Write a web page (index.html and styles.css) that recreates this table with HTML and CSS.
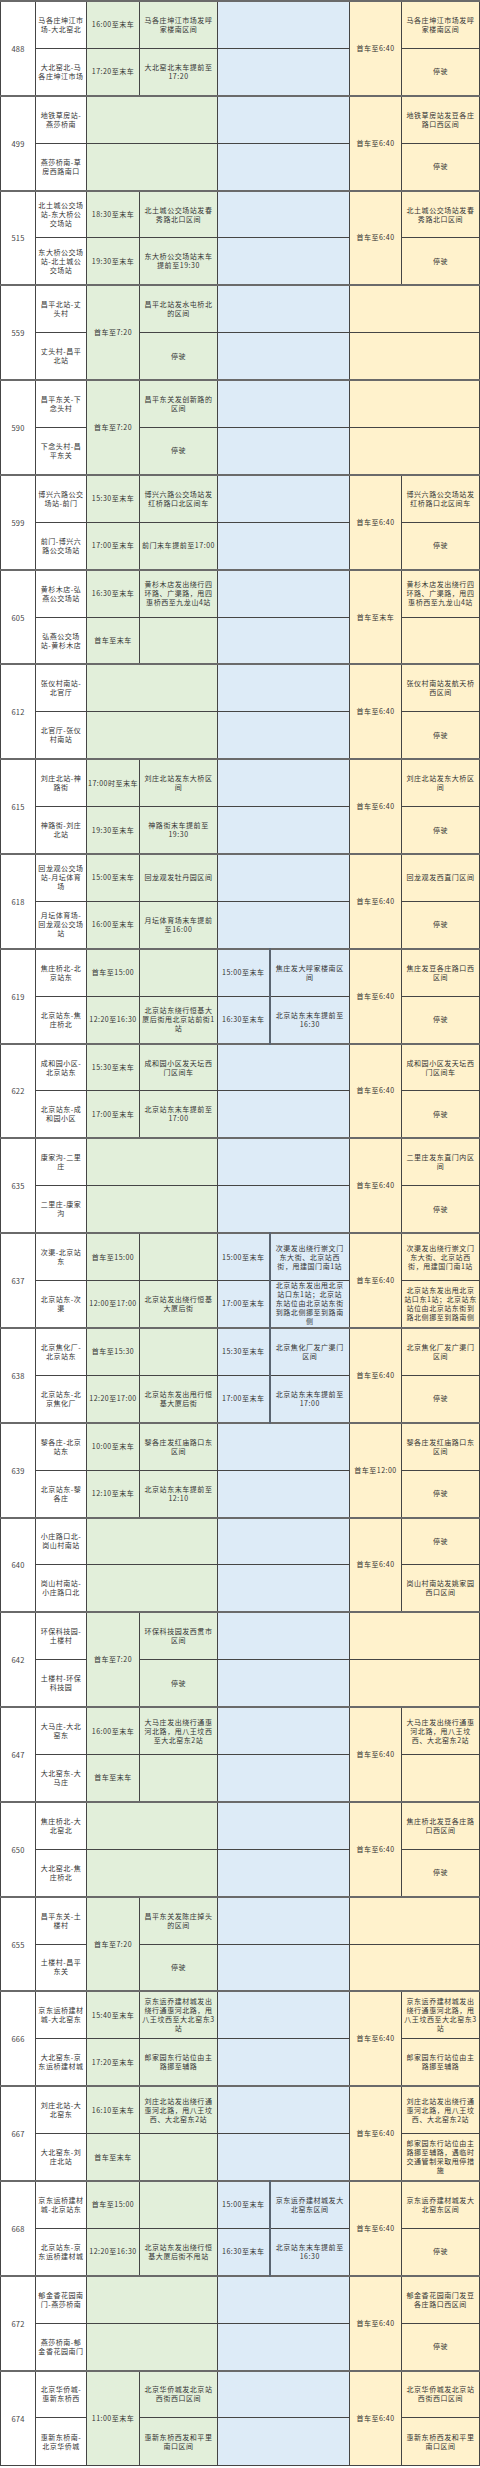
FILE: index.html
```html
<!DOCTYPE html>
<html lang="zh-CN">
<head>
<meta charset="utf-8">
<title>公交线路调整表</title>
<link rel="stylesheet" href="styles.css">
</head>
<body>
<table class="t">
<colgroup>
<col class="w1"><col class="w2"><col class="w3"><col class="w4"><col class="w5"><col class="w6"><col class="w7"><col class="w8">
</colgroup>
<tbody>
<tr class="gs"><td class="r" rowspan="2">488</td><td class="s">马各庄坤江市场-大北窑北</td><td class="g t">16:00至末车</td><td class="g">马各庄坤江市场发呼家楼南区间</td><td class="b" colspan="2"></td><td class="y t" rowspan="2">首车至6:40</td><td class="y">马各庄坤江市场发呼家楼南区间</td></tr>
<tr><td class="s">大北窑北-马各庄坤江市场</td><td class="g t">17:20至末车</td><td class="g">大北窑北末车提前至17:20</td><td class="b" colspan="2"></td><td class="y">停驶</td></tr>

<tr class="gs"><td class="r" rowspan="2">499</td><td class="s">地铁草房站-燕莎桥南</td><td class="g" colspan="2"></td><td class="b" colspan="2"></td><td class="y t" rowspan="2">首车至6:40</td><td class="y">地铁草房站发豆各庄路口西区间</td></tr>
<tr><td class="s">燕莎桥南-草房西路南口</td><td class="g" colspan="2"></td><td class="b" colspan="2"></td><td class="y">停驶</td></tr>

<tr class="gs"><td class="r" rowspan="2">515</td><td class="s">北土城公交场站-东大桥公交场站</td><td class="g t">18:30至末车</td><td class="g">北土城公交场站发春秀路北口区间</td><td class="b" colspan="2"></td><td class="y t" rowspan="2">首车至6:40</td><td class="y">北土城公交场站发春秀路北口区间</td></tr>
<tr><td class="s">东大桥公交场站-北土城公交场站</td><td class="g t">19:30至末车</td><td class="g">东大桥公交场站末车提前至19:30</td><td class="b" colspan="2"></td><td class="y">停驶</td></tr>

<tr class="gs"><td class="r" rowspan="2">559</td><td class="s">昌平北站-丈头村</td><td class="g t" rowspan="2">首车至7:20</td><td class="g">昌平北站发水屯桥北的区间</td><td class="b" colspan="2"></td><td class="y" colspan="2"></td></tr>
<tr><td class="s">丈头村-昌平北站</td><td class="g">停驶</td><td class="b" colspan="2"></td><td class="y" colspan="2"></td></tr>

<tr class="gs"><td class="r" rowspan="2">590</td><td class="s">昌平东关-下念头村</td><td class="g t" rowspan="2">首车至7:20</td><td class="g">昌平东关发创新路的区间</td><td class="b" colspan="2"></td><td class="y" colspan="2"></td></tr>
<tr><td class="s">下念头村-昌平东关</td><td class="g">停驶</td><td class="b" colspan="2"></td><td class="y" colspan="2"></td></tr>

<tr class="gs"><td class="r" rowspan="2">599</td><td class="s">博兴六路公交场站-前门</td><td class="g t">15:30至末车</td><td class="g">博兴六路公交场站发红桥路口北区间车</td><td class="b" colspan="2"></td><td class="y t" rowspan="2">首车至6:40</td><td class="y">博兴六路公交场站发红桥路口北区间车</td></tr>
<tr><td class="s">前门-博兴六路公交场站</td><td class="g t">17:00至末车</td><td class="g">前门末车提前至17:00</td><td class="b" colspan="2"></td><td class="y">停驶</td></tr>

<tr class="gs"><td class="r" rowspan="2">605</td><td class="s">黄杉木店-弘燕公交场站</td><td class="g t">16:30至末车</td><td class="g">黄杉木店发出绕行四环路、广渠路，甩四惠桥西至九龙山4站</td><td class="b" colspan="2"></td><td class="y t" rowspan="2">首车至末车</td><td class="y">黄杉木店发出绕行四环路、广渠路，甩四惠桥西至九龙山4站</td></tr>
<tr><td class="s">弘燕公交场站-黄杉木店</td><td class="g t">首车至末车</td><td class="g"></td><td class="b" colspan="2"></td><td class="y"></td></tr>

<tr class="gs"><td class="r" rowspan="2">612</td><td class="s">张仪村南站-北官厅</td><td class="g" colspan="2"></td><td class="b" colspan="2"></td><td class="y t" rowspan="2">首车至6:40</td><td class="y">张仪村南站发航天桥西区间</td></tr>
<tr><td class="s">北官厅-张仪村南站</td><td class="g" colspan="2"></td><td class="b" colspan="2"></td><td class="y">停驶</td></tr>

<tr class="gs"><td class="r" rowspan="2">615</td><td class="s">刘庄北站-神路街</td><td class="g t">17:00时至末车</td><td class="g">刘庄北站发东大桥区间</td><td class="b" colspan="2"></td><td class="y t" rowspan="2">首车至6:40</td><td class="y">刘庄北站发东大桥区间</td></tr>
<tr><td class="s">神路街-刘庄北站</td><td class="g t">19:30至末车</td><td class="g">神路街末车提前至19:30</td><td class="b" colspan="2"></td><td class="y">停驶</td></tr>

<tr class="gs"><td class="r" rowspan="2">618</td><td class="s">回龙观公交场站-月坛体育场</td><td class="g t">15:00至末车</td><td class="g">回龙观发牡丹园区间</td><td class="b" colspan="2"></td><td class="y t" rowspan="2">首车至6:40</td><td class="y">回龙观发西直门区间</td></tr>
<tr><td class="s">月坛体育场-回龙观公交场站</td><td class="g t">16:00至末车</td><td class="g">月坛体育场末车提前至16:00</td><td class="b" colspan="2"></td><td class="y">停驶</td></tr>

<tr class="gs"><td class="r" rowspan="2">619</td><td class="s">焦庄桥北-北京站东</td><td class="g t">首车至15:00</td><td class="g"></td><td class="b t">15:00至末车</td><td class="b bd">焦庄发大呼家楼南区间</td><td class="y t" rowspan="2">首车至6:40</td><td class="y">焦庄发豆各庄路口西区间</td></tr>
<tr><td class="s">北京站东-焦庄桥北</td><td class="g t">12:20至16:30</td><td class="g">北京站东绕行恒基大厦后街甩北京站前街1站</td><td class="b t">16:30至末车</td><td class="b bd">北京站东末车提前至16:30</td><td class="y">停驶</td></tr>

<tr class="gs"><td class="r" rowspan="2">622</td><td class="s">成和园小区-北京站东</td><td class="g t">15:30至末车</td><td class="g">成和园小区发天坛西门区间车</td><td class="b" colspan="2"></td><td class="y t" rowspan="2">首车至6:40</td><td class="y">成和园小区发天坛西门区间车</td></tr>
<tr><td class="s">北京站东-成和园小区</td><td class="g t">17:00至末车</td><td class="g">北京站东末车提前至17:00</td><td class="b" colspan="2"></td><td class="y">停驶</td></tr>

<tr class="gs"><td class="r" rowspan="2">635</td><td class="s">康家沟-二里庄</td><td class="g" colspan="2"></td><td class="b" colspan="2"></td><td class="y t" rowspan="2">首车至6:40</td><td class="y">二里庄发东直门内区间</td></tr>
<tr><td class="s">二里庄-康家沟</td><td class="g" colspan="2"></td><td class="b" colspan="2"></td><td class="y">停驶</td></tr>

<tr class="gs"><td class="r" rowspan="2">637</td><td class="s">次渠-北京站东</td><td class="g t">首车至15:00</td><td class="g"></td><td class="b t">15:00至末车</td><td class="b bd">次渠发出绕行崇文门东大街、北京站西街，甩建国门南1站</td><td class="y t" rowspan="2">首车至6:40</td><td class="y">次渠发出绕行崇文门东大街、北京站西街，甩建国门南1站</td></tr>
<tr><td class="s">北京站东-次渠</td><td class="g t">12:00至17:00</td><td class="g">北京站发出绕行恒基大厦后街</td><td class="b t">17:00至末车</td><td class="b bd">北京站东发出甩北京站口东1站；北京站东站位由北京站东街到路北侧挪至到路南侧</td><td class="y">北京站东发出甩北京站口东1站；北京站东站位由北京站东街到路北侧挪至到路南侧</td></tr>

<tr class="gs"><td class="r" rowspan="2">638</td><td class="s">北京焦化厂-北京站东</td><td class="g t">首车至15:30</td><td class="g"></td><td class="b t">15:30至末车</td><td class="b bd">北京焦化厂发广渠门区间</td><td class="y t" rowspan="2">首车至6:40</td><td class="y">北京焦化厂发广渠门区间</td></tr>
<tr><td class="s">北京站东-北京焦化厂</td><td class="g t">12:20至17:00</td><td class="g">北京站东发出甩行恒基大厦后街</td><td class="b t">17:00至末车</td><td class="b bd">北京站东末车提前至17:00</td><td class="y">停驶</td></tr>

<tr class="gs"><td class="r" rowspan="2">639</td><td class="s">黎各庄-北京站东</td><td class="g t">10:00至末车</td><td class="g">黎各庄发红庙路口东区间</td><td class="b" colspan="2"></td><td class="y t" rowspan="2">首车至12:00</td><td class="y">黎各庄发红庙路口东区间</td></tr>
<tr><td class="s">北京站东-黎各庄</td><td class="g t">12:10至末车</td><td class="g">北京站东末车提前至12:10</td><td class="b" colspan="2"></td><td class="y">停驶</td></tr>

<tr class="gs"><td class="r" rowspan="2">640</td><td class="s">小庄路口北-岗山村南站</td><td class="g" colspan="2"></td><td class="b" colspan="2"></td><td class="y t" rowspan="2">首车至6:40</td><td class="y">停驶</td></tr>
<tr><td class="s">岗山村南站-小庄路口北</td><td class="g" colspan="2"></td><td class="b" colspan="2"></td><td class="y">岗山村南站发姚家园西口区间</td></tr>

<tr class="gs"><td class="r" rowspan="2">642</td><td class="s">环保科技园-土楼村</td><td class="g t" rowspan="2">首车至7:20</td><td class="g">环保科技园发西贯市区间</td><td class="b" colspan="2"></td><td class="y" colspan="2"></td></tr>
<tr><td class="s">土楼村-环保科技园</td><td class="g">停驶</td><td class="b" colspan="2"></td><td class="y" colspan="2"></td></tr>

<tr class="gs"><td class="r" rowspan="2">647</td><td class="s">大马庄-大北窑东</td><td class="g t">16:00至末车</td><td class="g">大马庄发出绕行通惠河北路，甩八王坟西至大北窑东2站</td><td class="b" colspan="2"></td><td class="y t" rowspan="2">首车至6:40</td><td class="y">大马庄发出绕行通惠河北路，甩八王坟西、大北窑东2站</td></tr>
<tr><td class="s">大北窑东-大马庄</td><td class="g t">首车至末车</td><td class="g"></td><td class="b" colspan="2"></td><td class="y"></td></tr>

<tr class="gs"><td class="r" rowspan="2">650</td><td class="s">焦庄桥北-大北窑北</td><td class="g" colspan="2"></td><td class="b" colspan="2"></td><td class="y t" rowspan="2">首车至6:40</td><td class="y">焦庄桥北发豆各庄路口西区间</td></tr>
<tr><td class="s">大北窑北-焦庄桥北</td><td class="g" colspan="2"></td><td class="b" colspan="2"></td><td class="y">停驶</td></tr>

<tr class="gs"><td class="r" rowspan="2">655</td><td class="s">昌平东关-土楼村</td><td class="g t" rowspan="2">首车至7:20</td><td class="g">昌平东关发陈庄掉头的区间</td><td class="b" colspan="2"></td><td class="y" colspan="2"></td></tr>
<tr><td class="s">土楼村-昌平东关</td><td class="g">停驶</td><td class="b" colspan="2"></td><td class="y" colspan="2"></td></tr>

<tr class="gs"><td class="r" rowspan="2">666</td><td class="s">京东运桥建材城-大北窑东</td><td class="g t">15:40至末车</td><td class="g">京东运乔建材城发出绕行通惠河北路，甩八王坟西至大北窑东3站</td><td class="b" colspan="2"></td><td class="y t" rowspan="2">首车至6:40</td><td class="y">京东运乔建材城发出绕行通惠河北路，甩八王坟西至大北窑东3站</td></tr>
<tr><td class="s">大北窑东-京东运桥建材城</td><td class="g t">17:20至末车</td><td class="g">郎家园东行站位由主路挪至辅路</td><td class="b" colspan="2"></td><td class="y">郎家园东行站位由主路挪至辅路</td></tr>

<tr class="gs"><td class="r" rowspan="2">667</td><td class="s">刘庄北站-大北窑东</td><td class="g t">16:10至末车</td><td class="g">刘庄北站发出绕行通惠河北路，甩八王坟西、大北窑东2站</td><td class="b" colspan="2"></td><td class="y t" rowspan="2">首车至6:40</td><td class="y">刘庄北站发出绕行通惠河北路，甩八王坟西、大北窑东2站</td></tr>
<tr><td class="s">大北窑东-刘庄北站</td><td class="g t">首车至末车</td><td class="g"></td><td class="b" colspan="2"></td><td class="y">郎家园东行站位由主路挪至辅路，遇临时交通管制采取甩停措施</td></tr>

<tr class="gs"><td class="r" rowspan="2">668</td><td class="s">京东运桥建材城-北京站东</td><td class="g t">首车至15:00</td><td class="g"></td><td class="b t">15:00至末车</td><td class="b bd">京东运乔建材城发大北窑东区间</td><td class="y t" rowspan="2">首车至6:40</td><td class="y">京东运乔建材城发大北窑东区间</td></tr>
<tr><td class="s">北京站东-京东运桥建材城</td><td class="g t">12:20至16:30</td><td class="g">北京站东发出绕行恒基大厦后街不甩站</td><td class="b t">16:30至末车</td><td class="b bd">北京站东末车提前至16:30</td><td class="y">停驶</td></tr>

<tr class="gs"><td class="r" rowspan="2">672</td><td class="s">郁金香花园南门-燕莎桥南</td><td class="g" colspan="2"></td><td class="b" colspan="2"></td><td class="y t" rowspan="2">首车至6:40</td><td class="y">郁金香花园南门发豆各庄路口西区间</td></tr>
<tr><td class="s">燕莎桥南-郁金香花园南门</td><td class="g" colspan="2"></td><td class="b" colspan="2"></td><td class="y">停驶</td></tr>

<tr class="gs"><td class="r" rowspan="2">674</td><td class="s">北京华侨城-惠新东桥西</td><td class="g t" rowspan="2">11:00至末车</td><td class="g">北京华侨城发北京站西街西口区间</td><td class="b" colspan="2"></td><td class="y t" rowspan="2">首车至6:40</td><td class="y">北京华侨城发北京站西街西口区间</td></tr>
<tr><td class="s">惠新东桥南-北京华侨城</td><td class="g">惠新东桥西发和平里南口区间</td><td class="b" colspan="2"></td><td class="y">惠新东桥西发和平里南口区间</td></tr>
</tbody>
</table>
</body>
</html>
```
FILE: styles.css
```css
html, body {
  margin: 0;
  padding: 0;
  background: #ffffff;
}

.t {
  border-collapse: collapse;
  table-layout: fixed;
  width: 479px;
  font-family: "Noto Sans CJK SC", "Noto Sans", sans-serif;
  font-size: 7px;
  line-height: 9px;
  letter-spacing: 0.55px;
  color: #333333;
}

.w1 { width: 35px; }
.w2 { width: 51px; }
.w3 { width: 53px; }
.w4 { width: 78px; }
.w5 { width: 52px; }
.w6 { width: 80px; }
.w7 { width: 52px; }
.w8 { width: 78px; }

.t tr {
  height: 47.4px;
}

.t td {
  border: 1px solid #454545;
  padding: 0 1px;
  text-align: center;
  vertical-align: middle;
  overflow: hidden;
  word-break: normal;
  line-break: auto;
}

.t tr.gs td {
  border-top: 2px solid #6a6a6a;
}

.t td.r {
  background: #ffffff;
  color: #444444;
  font-size: 7.5px;
  letter-spacing: 0.2px;
}

.t td.s {
  background: #ffffff;
  padding: 0 2px;
}

.t td.g {
  background: #e2efda;
}

.t td.b {
  background: #ddebf7;
}

.t td.b.t {
  border-right: 2px solid #5a6470;
}

.t td.b.bd {
  padding: 0 5px;
}

.t td.y {
  background: #fff2cc;
}

.t td.t {
  padding: 0;
  letter-spacing: 0.5px;
}
```
